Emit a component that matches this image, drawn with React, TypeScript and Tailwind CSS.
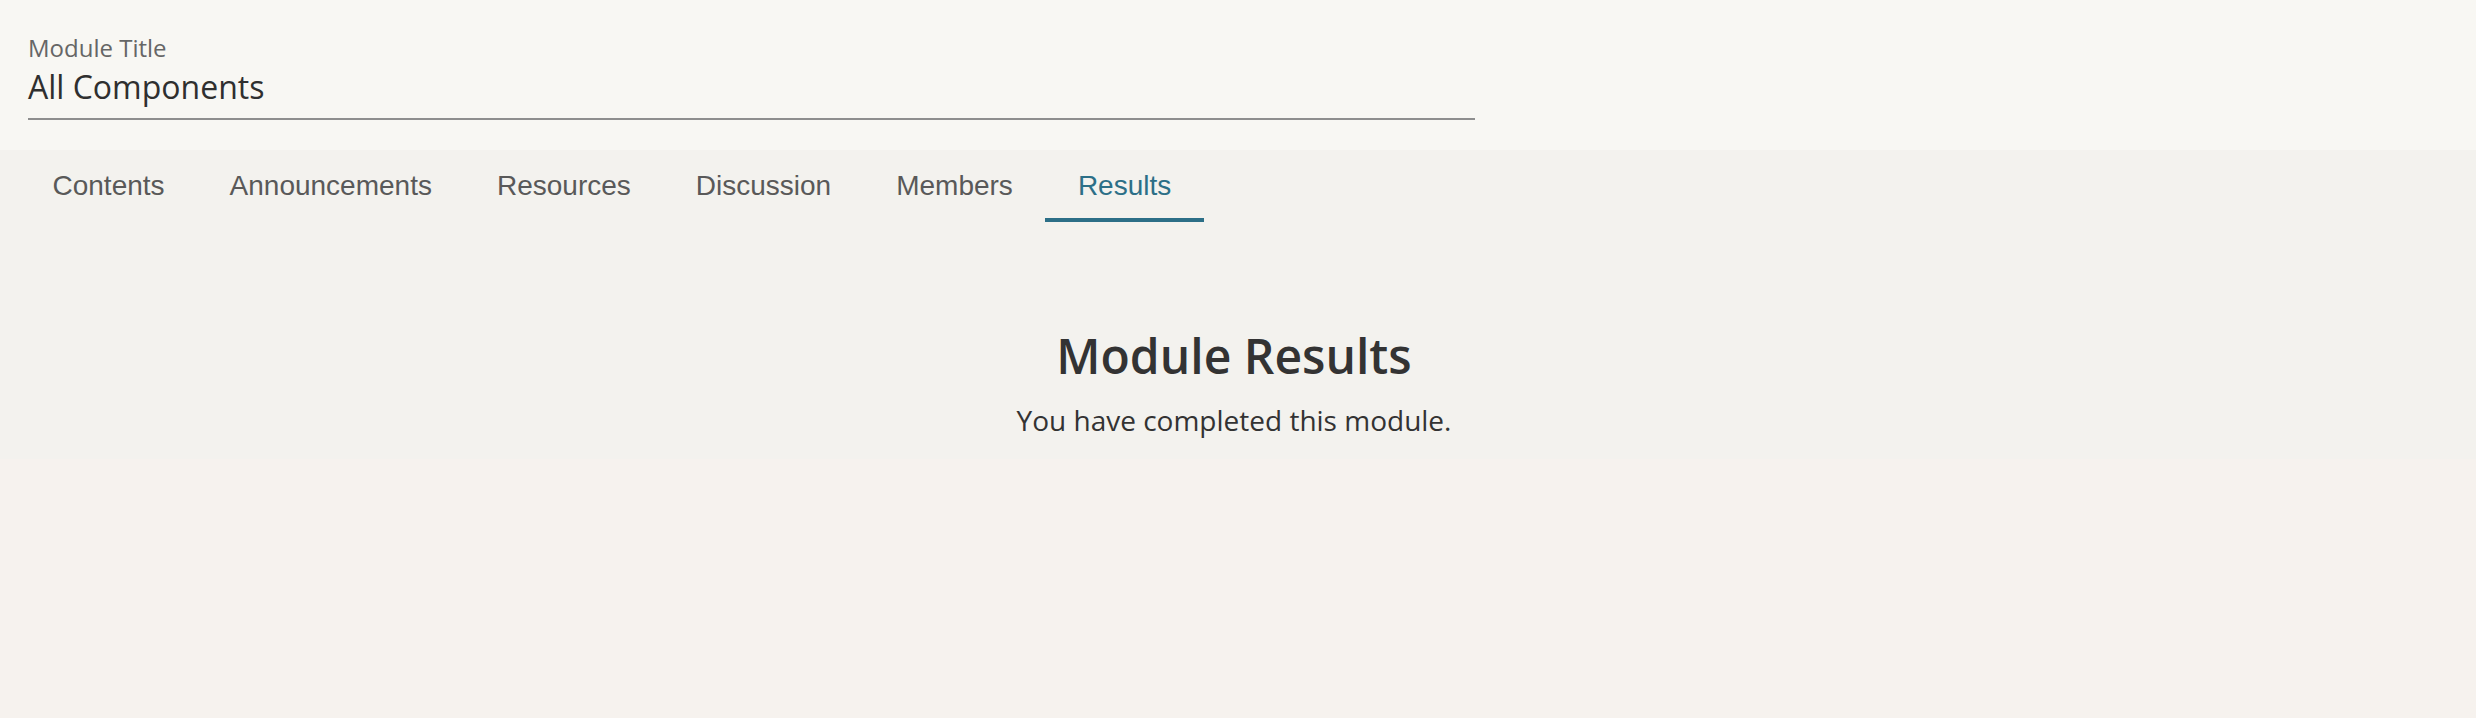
import React from "react";

const tabs = ["Contents", "Announcements", "Resources", "Discussion", "Members", "Results"];

export default function App() {
  return (
    <div className="min-h-screen w-full bg-[#f6f2ee]">
      <header className="bg-[#f8f7f3] px-[28px] pt-[31px] pb-[30px]" style={{ fontFamily: '"Open Sans", sans-serif' }}>
        <div className="w-[1447px]">
          <label className="block text-[24px] leading-[33.6px] text-[#666666]">Module Title</label>
          <div className="border-b-2 border-[#8e8e8e] pb-[9px] text-[32px] leading-[44.8px] text-[#2f2f2f]">
            All Components
          </div>
        </div>
      </header>
      <section className="bg-[#f3f2ee] pb-[19px]">
        <nav className="flex pl-[20px]" style={{ fontFamily: '"Liberation Sans", Arial, sans-serif' }}>
          {tabs.map((t) => {
            const active = t === "Results";
            return (
              <div
                key={t}
                className={
                  active
                    ? "px-[32.5px] pt-[20px] pb-[16px] border-b-4 border-[#2c6f87] text-[28px] leading-[32px] text-[#2c6f87]"
                    : "px-[32.5px] pt-[20px] pb-[16px] border-b-4 border-transparent text-[28px] leading-[32px] text-[#595959]"
                }
              >
                {t}
              </div>
            );
          })}
        </nav>
        <div className="mt-[105px] pr-[8px] text-center text-[#333333]" style={{ fontFamily: '"Open Sans", sans-serif' }}>
          <h2 className="text-[48px] font-semibold leading-[57.6px]">Module Results</h2>
          <p className="mt-[16px] text-[28px] leading-[39.2px]">You have completed this module.</p>
        </div>
      </section>
    </div>
  );
}
